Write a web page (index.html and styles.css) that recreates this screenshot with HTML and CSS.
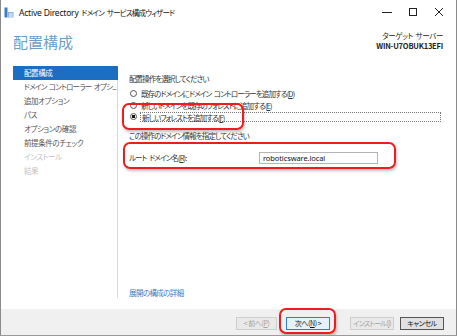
FILE: index.html
```html
<!DOCTYPE html>
<html lang="ja">
<head>
    <meta charset="UTF-8">
    <meta name="viewport" content="width=device-width, initial-scale=1.0">
    <title>Active Directory ドメイン サービス構成ウィザード</title>
    <link rel="stylesheet" href="styles.css">
</head>
<body>
    <div class="window">
        <div class="titlebar">
            <svg class="app-icon" width="10" height="11" viewBox="0 0 10 11">
                <rect x="0.5" y="0.5" width="3" height="10" fill="#3d7cc9"/>
                <rect x="4" y="5" width="5.5" height="5.5" fill="#8fb5df"/>
                <rect x="5" y="6.5" width="3.5" height="1" fill="#fff"/>
                <rect x="5" y="8.5" width="3.5" height="1" fill="#fff"/>
            </svg>
            <span class="title"><span class="latin">Active Directory</span> ドメイン サービス構成ウィザード</span>
            <div class="controls">
                <span class="ctl"><svg width="10" height="10" viewBox="0 0 10 10"><path d="M0 5.5h10" stroke="#222" stroke-width="1"/></svg></span>
                <span class="ctl"><svg width="10" height="10" viewBox="0 0 10 10"><rect x="1.5" y="1.5" width="7" height="7" fill="none" stroke="#222" stroke-width="1"/></svg></span>
                <span class="ctl"><svg width="10" height="10" viewBox="0 0 10 10"><path d="M1 1l8 8M9 1l-8 8" stroke="#222" stroke-width="1"/></svg></span>
            </div>
        </div>

        <div class="header">
            <h1>配置構成</h1>
            <div class="target">
                <div>ターゲット サーバー</div>
                <div>WIN-U7OBUK13EFI</div>
            </div>
        </div>

        <div class="main">
            <ul class="nav">
                <li class="active">配置構成</li>
                <li class="long">ドメイン コントローラー オプシ...</li>
                <li>追加オプション</li>
                <li>パス</li>
                <li>オプションの確認</li>
                <li>前提条件のチェック</li>
                <li class="off">インストール</li>
                <li class="off">結果</li>
            </ul>

            <div class="content">
                <p class="group">配置操作を選択してください</p>
                <div class="radio"><span class="dot"></span><span>既存のドメインにドメイン コントローラーを追加する(<u>D</u>)</span></div>
                <div class="radio"><span class="dot"></span><span>新しいドメインを既存のフォレストに追加する(<u>E</u>)</span></div>
                <div class="radio checked"><span class="dot"></span><span class="focus">新しいフォレストを追加する(<u>F</u>)</span></div>

                <p class="group second">この操作のドメイン情報を指定してください</p>
                <div class="field">
                    <span class="label">ルート ドメイン名(<u>R</u>):</span>
                    <span class="input">roboticsware.local</span>
                </div>

                <a class="more">展開の構成の詳細</a>
            </div>
        </div>

        <div class="footer">
            <button class="btn" disabled>&lt; 前へ(<u>P</u>)</button>
            <button class="btn primary">次へ(<u>N</u>) &gt;</button>
            <button class="btn install" disabled>インストール(<u>I</u>)</button>
            <button class="btn cancel">キャンセル</button>
        </div>

        <div class="mark mark-forest"></div>
        <div class="mark mark-domain"></div>
        <div class="mark mark-next"></div>
    </div>
</body>
</html>
```

FILE: styles.css
```css
body {
    margin: 0;
    font-family: "Noto Sans CJK JP", "Noto Sans", sans-serif;
    font-feature-settings: "palt";
    color: #333;
    background: #fff;
}

.window {
    position: relative;
    width: 457px;
    height: 336px;
    box-sizing: border-box;
    border-left: 1px solid #8a8a8a;
    border-right: 1px solid #8a8a8a;
    border-bottom: 1px solid #9a9a9a;
    background: #fff;
    display: flex;
    flex-direction: column;
    overflow: hidden;
}

.titlebar {
    height: 24px;
    display: flex;
    align-items: center;
    padding-left: 3px;
}

.app-icon {
    margin-right: 5px;
}

.title {
    font-size: 7.5px;
    color: #111;
    letter-spacing: -0.8px;
    word-spacing: 2px;
    white-space: nowrap;
}

.title .latin {
    font-family: "Noto Sans", sans-serif;
    font-size: 8.5px;
    letter-spacing: -0.2px;
    word-spacing: 0;
}

.controls {
    margin-left: auto;
    display: flex;
    margin-right: 4px;
}

.ctl {
    width: 26px;
    height: 24px;
    display: flex;
    align-items: center;
    justify-content: center;
}

.header {
    height: 41px;
    display: flex;
    justify-content: space-between;
    padding: 0 13px 0 12px;
}

h1 {
    margin: 9px 0 0;
    font-size: 15px;
    line-height: 18px;
    font-weight: normal;
    color: #6e9ec4;
}

.target {
    margin-top: 7px;
    text-align: right;
    font-size: 7.5px;
    line-height: 10px;
    color: #222;
}

.target div:first-child {
    letter-spacing: -0.4px;
    word-spacing: 1.5px;
}

.target div:last-child {
    font-weight: bold;
    letter-spacing: -0.2px;
}

.main {
    height: 244px;
    display: flex;
}

.nav {
    list-style: none;
    margin: 1px 0 11px;
    padding: 0 0 0 12px;
    width: 104px;
    border-right: 1px solid #d9d9d9;
    font-size: 7.5px;
    letter-spacing: -0.4px;
    color: #555;
}

.nav li {
    height: 14px;
    line-height: 14px;
    padding-left: 11px;
    white-space: nowrap;
}

.nav li.long {
    letter-spacing: -0.8px;
    word-spacing: 1.5px;
}

.nav li.active {
    background: #1b6ec2;
    color: #fff;
    margin-right: -1px;
}

.nav li.off {
    color: #c4c4c4;
}

.content {
    flex: 1;
    display: flex;
    flex-direction: column;
    padding: 8px 0 10px 11px;
    font-size: 7.5px;
    letter-spacing: -0.9px;
    word-spacing: 2px;
}

.group {
    margin: 0 0 3px;
    line-height: 12px;
}

.group.second {
    margin-top: 7px;
}

.radio {
    height: 11.5px;
    display: flex;
    align-items: center;
    white-space: nowrap;
}

.dot {
    width: 7px;
    height: 7px;
    box-sizing: border-box;
    border: 1px solid #555;
    border-radius: 50%;
    margin: 0 4px 0 1px;
    flex: none;
}

.checked .dot {
    background: radial-gradient(circle, #111 1.6px, #fff 2px);
}

.focus {
    width: 301px;
    height: 10px;
    line-height: 10px;
    box-sizing: border-box;
    border: 1px dotted #777;
    padding-left: 1px;
    margin-left: -1px;
}

.field {
    margin-top: 7px;
    display: flex;
    align-items: center;
    height: 12px;
}

.label {
    width: 130px;
}

.input {
    width: 119px;
    height: 12px;
    box-sizing: border-box;
    border: 1px solid #b5b5b5;
    line-height: 10px;
    padding-left: 3px;
    font-family: "Noto Sans", sans-serif;
    font-size: 7.5px;
    letter-spacing: -0.1px;
    word-spacing: 0;
    color: #111;
}

.more {
    margin-top: auto;
    color: #3c7dc4;
    line-height: 12px;
    letter-spacing: -0.6px;
}

.footer {
    flex: 1;
    background: #f0f0f0;
    display: flex;
    align-items: flex-start;
    padding: 8px 12px 0 0;
    justify-content: flex-end;
}

.btn {
    height: 13px;
    width: 44px;
    padding: 0;
    border: 1px solid #adadad;
    background: #e1e1e1;
    font-family: inherit;
    font-feature-settings: "palt";
    font-size: 7px;
    letter-spacing: -0.4px;
    color: #111;
    line-height: 11px;
    white-space: nowrap;
    overflow: hidden;
}

.btn[disabled] {
    width: 41px;
    color: #a3a3a3;
    border-color: #cfcfcf;
    background: #e9e9e9;
}

.primary {
    margin-left: 9px;
    border-color: #2a7fd4;
    background: #e5f1fb;
}

.btn.install {
    width: 44px;
    margin-left: 20px;
    letter-spacing: -0.7px;
}

.cancel {
    margin-left: 6px;
    border-color: #555;
}

.mark {
    position: absolute;
    border: 2px solid #ee1c1c;
    border-radius: 7px;
    box-shadow: 1px 2px 3px rgba(0, 0, 0, 0.25);
}

.mark-forest {
    left: 121px;
    top: 103px;
    width: 118px;
    height: 23px;
}

.mark-domain {
    left: 122px;
    top: 142px;
    width: 269px;
    height: 23px;
}

.mark-next {
    left: 278px;
    top: 308px;
    width: 53px;
    height: 22px;
}
```
